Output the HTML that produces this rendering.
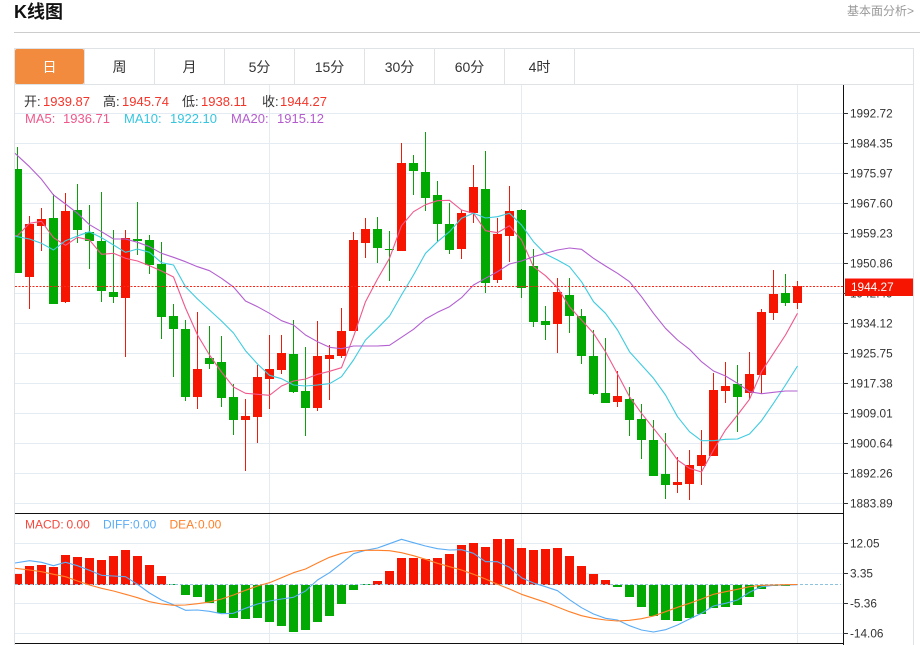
<!DOCTYPE html>
<html><head><meta charset="utf-8">
<style>
html,body{margin:0;padding:0;background:#fff;width:920px;height:645px;overflow:hidden}
body{position:relative;font-family:"Liberation Sans","Noto Sans CJK SC",sans-serif}
.a{position:absolute;white-space:nowrap}
.tab{position:absolute;top:49px;height:35px;width:69px;line-height:37px;text-align:center;font-size:14px;color:#333;border-right:1px solid #e0e3e6}
svg{position:absolute;left:0;top:0}
svg text{font-family:"Liberation Sans","Noto Sans CJK SC",sans-serif}
</style></head><body>
<div class="a" style="left:14px;top:1px;font-size:18px;line-height:22px;font-weight:bold;color:#111">K线图</div>
<div class="a" style="left:847px;top:4px;font-size:12px;line-height:15px;color:#999">基本面分析&gt;</div>
<div class="a" style="left:14px;top:32px;width:906px;height:1px;background:#ccc"></div>
<div class="a" style="left:14px;top:48px;width:899px;height:1px;background:#e0e3e6"></div>
<div class="a" style="left:14px;top:84px;width:899px;height:1px;background:#e0e3e6"></div>
<div class="a" style="left:14px;top:48px;width:1px;height:597px;background:#e0e3e6"></div>
<div class="a" style="left:913px;top:48px;width:1px;height:597px;background:#e0e3e6"></div>
<div class="a" style="left:15px;top:49px;width:69px;height:35px;background:#f38b3e;border-radius:2px;line-height:37px;text-align:center;font-size:14px;color:#fff">日</div>
<div class="tab" style="left:85px">周</div>
<div class="tab" style="left:155px">月</div>
<div class="tab" style="left:225px">5分</div>
<div class="tab" style="left:295px">15分</div>
<div class="tab" style="left:365px">30分</div>
<div class="tab" style="left:435px">60分</div>
<div class="tab" style="left:505px">4时</div>
<div class="a" style="left:84px;top:49px;width:1px;height:35px;background:#e0e3e6"></div>
<svg width="920" height="645" viewBox="0 0 920 645">
<path shape-rendering="crispEdges" fill="none" stroke="#e4ebf2" stroke-width="1" d="M15 113.5H843M15 143.5H843M15 173.5H843M15 203.5H843M15 233.5H843M15 263.5H843M15 293.5H843M15 323.5H843M15 353.5H843M15 383.5H843M15 413.5H843M15 443.5H843M15 473.5H843M15 503.5H843M15 543.5H843M15 573.5H843M15 603.5H843M15 633.5H843M269.5 85V643M521.5 85V643M797.5 85V643"/>
<path shape-rendering="crispEdges" fill="none" stroke="#ee1a0a" stroke-width="1" d="M29.5 216V309M41.5 208V251M65.5 193V303M125.5 230V357M197.5 312V409M245.5 399V471M257.5 365V443M269.5 335V409M281.5 335V374M317.5 321V411M329.5 345V400M341.5 308V358M353.5 232V331M365.5 218V258M401.5 143V251M461.5 210V259M473.5 165V223M497.5 218V283M509.5 186V262M557.5 278V353M617.5 371V407M677.5 457V493M689.5 450V500M701.5 430V485M713.5 373V456M725.5 362V403M749.5 352V399M761.5 309V394M773.5 270V320M797.5 281V309"/>
<path shape-rendering="crispEdges" fill="none" stroke="#0ba00b" stroke-width="1" d="M17.5 147V273M53.5 194V304M77.5 184V243M89.5 205V269M101.5 192V302M113.5 230V303M137.5 202V255M149.5 235V274M161.5 242V339M173.5 304V377M185.5 320V401M209.5 326V369M221.5 336V407M233.5 384V435M293.5 320V393M305.5 347V436M377.5 217V263M389.5 231V281M413.5 155V195M425.5 132V211M437.5 181V242M449.5 203V254M485.5 151V293M521.5 209V298M533.5 249V327M545.5 306V340M569.5 278V333M581.5 309V364M593.5 330V395M605.5 338V403M629.5 387V436M641.5 404V459M653.5 420V476M665.5 433V499M737.5 365V432M785.5 274V306"/>
<path shape-rendering="crispEdges" fill="#f51500" d="M25 224h9v53h-9zM37 219h9v7h-9zM61 211h9v91h-9zM121 238h9v60h-9zM193 369h9v28h-9zM241 416h9v4h-9zM253 377h9v40h-9zM265 369h9v10h-9zM277 353h9v17h-9zM313 356h9v52h-9zM325 355h9v4h-9zM337 331h9v25h-9zM349 240h9v91h-9zM361 229h9v14h-9zM397 163h9v88h-9zM457 213h9v36h-9zM469 187h9v26h-9zM493 234h9v46h-9zM505 211h9v25h-9zM553 292h9v32h-9zM613 396h9v6h-9zM673 482h9v3h-9zM685 465h9v19h-9zM697 455h9v11h-9zM709 390h9v66h-9zM721 386h9v5h-9zM745 374h9v19h-9zM757 312h9v63h-9zM769 294h9v19h-9zM793 286h9v17h-9z"/>
<path shape-rendering="crispEdges" fill="#02a902" d="M15 169h7v104h-7zM49 218h9v86h-9zM73 210h9v20h-9zM85 232h9v9h-9zM97 241h9v50h-9zM109 292h9v5h-9zM133 239h9v2h-9zM145 240h9v25h-9zM157 264h9v53h-9zM169 316h9v13h-9zM181 329h9v68h-9zM205 358h9v6h-9zM217 362h9v36h-9zM229 397h9v23h-9zM289 354h9v38h-9zM301 391h9v17h-9zM373 229h9v19h-9zM385 249h9v1h-9zM409 163h9v8h-9zM421 172h9v26h-9zM433 195h9v29h-9zM445 224h9v26h-9zM481 189h9v94h-9zM517 210h9v78h-9zM529 266h9v56h-9zM541 321h9v4h-9zM565 295h9v21h-9zM577 316h9v40h-9zM589 356h9v38h-9zM601 393h9v10h-9zM625 399h9v21h-9zM637 419h9v21h-9zM649 440h9v36h-9zM661 474h9v11h-9zM733 384h9v13h-9zM781 293h9v10h-9z"/>
<g fill="none" stroke-width="1.1" stroke-linejoin="round">
<polyline stroke="#f0588c" points="15,236 17.5,235.7 29.5,223.3 41.5,221.3 53.5,237.7 65.5,245.3 77.5,237.3 89.5,240 101.5,254.3 113.5,253.3 125.5,258.3 137.5,261 149.5,265.7 161.5,271 173.5,277 185.5,308 197.5,335 209.5,355 221.5,372 233.5,387 245.5,393.3 257.5,394.3 269.5,395.3 281.5,386 293.5,381 305.5,379 317.5,374.3 329.5,371.3 341.5,367.7 353.5,336.7 365.5,301.7 377.5,279 389.5,258.3 401.5,225.7 413.5,211.7 425.5,204.7 437.5,200.7 449.5,200.3 461.5,210 473.5,213.3 485.5,230.7 497.5,232.7 509.5,225.7 521.5,240 533.5,266.7 545.5,275.7 557.5,287.7 569.5,306.7 581.5,320 593.5,333.3 605.5,351.7 617.5,374 629.5,396.7 641.5,413.3 653.5,428.3 665.5,443.3 677.5,460 689.5,468.3 701.5,472 713.5,450 725.5,430 737.5,415 749.5,399.3 761.5,371.7 773.5,353.3 785.5,335 797.5,313.3"/>
<polyline stroke="#3ecbe0" points="15,236 17.5,236.7 29.5,239 41.5,243.3 53.5,250 65.5,240.7 77.5,236 89.5,231.7 101.5,237.7 113.5,245 125.5,252.3 137.5,249 149.5,252.3 161.5,262.7 173.5,265 185.5,286.7 197.5,299 209.5,310 221.5,321 233.5,333 245.5,350.7 257.5,364 269.5,375.3 281.5,378.7 293.5,385 305.5,386 317.5,385 329.5,383.7 341.5,376.7 353.5,360 365.5,340 377.5,328.3 389.5,316 401.5,295 413.5,275 425.5,253.3 437.5,241.7 449.5,231.7 461.5,218.3 473.5,213.3 485.5,218 497.5,216.7 509.5,213.3 521.5,225 533.5,241.7 545.5,254 557.5,260 569.5,266.7 581.5,281.7 593.5,301.7 605.5,313.3 617.5,330 629.5,351.7 641.5,365 653.5,378.3 665.5,395 677.5,416.7 689.5,431.7 701.5,440.7 713.5,440.7 725.5,439.3 737.5,439 749.5,434 761.5,420.7 773.5,403.3 785.5,385 797.5,366"/>
<polyline stroke="#b35fd0" points="15,153.3 29.5,166.7 41.5,179.3 53.5,195 65.5,204 77.5,213.3 89.5,224.7 101.5,231.7 113.5,239 125.5,239 137.5,242.3 149.5,246.7 161.5,253.3 173.5,257.3 185.5,261.7 197.5,266.7 209.5,270.7 221.5,278.3 233.5,287 245.5,301 257.5,306.7 269.5,313.3 281.5,320.7 293.5,325 305.5,335 317.5,341.7 329.5,347.3 341.5,348.7 353.5,346 365.5,346 377.5,346 389.5,345.3 401.5,337.3 413.5,329.3 425.5,319 437.5,312.3 449.5,306.7 461.5,297.7 473.5,285 485.5,278.3 497.5,271.7 509.5,264 521.5,261 533.5,256.7 545.5,253.3 557.5,250 569.5,248 581.5,249.3 593.5,258.3 605.5,266 617.5,273.3 629.5,281.7 641.5,296.7 653.5,313.3 665.5,328.3 677.5,340 689.5,349.3 701.5,361.7 713.5,371 725.5,376 737.5,383.3 749.5,391.7 761.5,393.7 773.5,392.3 785.5,391 797.5,391"/>
</g>
<path fill="none" stroke="#f5281a" stroke-width="1" stroke-dasharray="2 1.5" shape-rendering="crispEdges" d="M15 286.5H843"/>
<path shape-rendering="crispEdges" fill="none" stroke="#111" stroke-width="1" d="M15 513.5H843M15 643.5H843M843.5 85V645"/>
<path shape-rendering="crispEdges" fill="none" stroke="#333" stroke-width="1" d="M843 113.5h5M843 143.5h5M843 173.5h5M843 203.5h5M843 233.5h5M843 263.5h5M843 293.5h5M843 323.5h5M843 353.5h5M843 383.5h5M843 413.5h5M843 443.5h5M843 473.5h5M843 503.5h5M843 543.5h5M843 573.5h5M843 603.5h5M843 633.5h5"/>
<path shape-rendering="crispEdges" fill="#f51500" d="M15 574h7v11h-7zM25 566h9v19h-9zM37 565h9v20h-9zM49 567h9v18h-9zM61 555h9v30h-9zM73 557h9v28h-9zM85 558h9v27h-9zM97 560h9v25h-9zM109 556h9v29h-9zM121 550h9v35h-9zM133 556h9v29h-9zM145 565h9v20h-9zM157 576h9v9h-9zM373 581h9v4h-9zM385 571h9v14h-9zM397 558h9v27h-9zM409 558h9v27h-9zM421 559h9v26h-9zM433 558h9v27h-9zM445 554h9v31h-9zM457 545h9v40h-9zM469 543h9v42h-9zM481 547h9v38h-9zM493 539h9v46h-9zM505 539h9v46h-9zM517 548h9v37h-9zM529 550h9v35h-9zM541 549h9v36h-9zM553 548h9v37h-9zM565 556h9v29h-9zM577 566h9v19h-9zM589 574h9v11h-9zM601 580h9v5h-9z"/>
<path shape-rendering="crispEdges" fill="#02a902" d="M169 584h9v1h-9zM181 585h9v10h-9zM193 585h9v12h-9zM205 585h9v18h-9zM217 585h9v28h-9zM229 585h9v33h-9zM241 585h9v34h-9zM253 585h9v33h-9zM265 585h9v37h-9zM277 585h9v41h-9zM289 585h9v47h-9zM301 585h9v45h-9zM313 585h9v37h-9zM325 585h9v31h-9zM337 585h9v19h-9zM349 585h9v5h-9zM361 584h9v1h-9zM613 585h9v2h-9zM625 585h9v12h-9zM637 585h9v22h-9zM649 585h9v31h-9zM661 585h9v35h-9zM673 585h9v36h-9zM685 585h9v33h-9zM697 585h9v29h-9zM709 585h9v23h-9zM721 585h9v22h-9zM733 585h9v20h-9zM745 585h9v12h-9zM757 585h9v4h-9zM769 585h9v1h-9zM781 585h9v1h-9z"/>
<path fill="none" stroke="#8cc4e0" stroke-width="1" stroke-dasharray="3 2" shape-rendering="crispEdges" d="M15 584.5H841"/>
<g fill="none" stroke-width="1.1" stroke-linejoin="round">
<polyline stroke="#5aacf5" points="15,563 29.5,560.7 41.5,562.3 53.5,565.7 65.5,562.3 77.5,565.7 89.5,570.3 101.5,575.3 113.5,576 125.5,576.7 137.5,584.3 149.5,593 161.5,600 173.5,604.7 185.5,610.3 197.5,610 209.5,611.3 221.5,613.7 233.5,613.3 245.5,608.3 257.5,604 269.5,601 281.5,599 293.5,597.3 305.5,591 317.5,580 329.5,572.7 341.5,563.3 353.5,553.7 365.5,550.3 377.5,548 389.5,543.7 401.5,539.3 413.5,542.7 425.5,546 437.5,548.7 449.5,550 461.5,549.7 473.5,553.3 485.5,561.7 497.5,561.7 509.5,567.3 521.5,577.7 533.5,583 545.5,586.7 557.5,590.7 569.5,599.7 581.5,607.7 593.5,614 605.5,618.3 617.5,620 629.5,625.7 641.5,630 653.5,632 665.5,629.7 677.5,625 689.5,619 701.5,613.3 713.5,606 725.5,603.3 737.5,600 749.5,592.3 761.5,586.7 773.5,585.3 785.5,585 797.5,584.7"/>
<polyline stroke="#ff7f27" points="15,568.3 29.5,570 41.5,571.7 53.5,574.3 65.5,576.7 77.5,581 89.5,585 101.5,588.3 113.5,591 125.5,594.3 137.5,597.7 149.5,601.7 161.5,604 173.5,605.3 185.5,605 197.5,603.7 209.5,602 221.5,599 233.5,595 245.5,590.3 257.5,586 269.5,582.7 281.5,577.7 293.5,572.7 305.5,569 317.5,563 329.5,557.3 341.5,553.3 353.5,551 365.5,550.3 377.5,550.3 389.5,550.7 401.5,552.7 413.5,555.7 425.5,559.3 437.5,563.3 449.5,566.7 461.5,570 473.5,574.3 485.5,579 497.5,584.3 509.5,589 521.5,594.3 533.5,598.3 545.5,602.3 557.5,607 569.5,611.7 581.5,615.7 593.5,618.3 605.5,620 617.5,621 629.5,620.3 641.5,618.7 653.5,616 665.5,611.7 677.5,607.3 689.5,603.3 701.5,599 713.5,594.3 725.5,591.7 737.5,589.3 749.5,586.7 761.5,585.3 773.5,585 785.5,584.7 797.5,584.5"/>
</g>
<text x="850" y="297.5" font-size="11.8" fill="#333">1942.49</text>
<rect x="845" y="278" width="68" height="18" fill="#f51500"/>
<rect x="845" y="278" width="68" height="1" fill="#f88"/>
<g font-size="11.8" fill="#333">
<text x="850" y="117.5">1992.72</text><text x="850" y="147.5">1984.35</text><text x="850" y="177.5">1975.97</text><text x="850" y="207.5">1967.60</text><text x="850" y="237.5">1959.23</text><text x="850" y="267.5">1950.86</text><text x="850" y="327.5">1934.12</text><text x="850" y="357.5">1925.75</text><text x="850" y="387.5">1917.38</text><text x="850" y="417.5">1909.01</text><text x="850" y="447.5">1900.64</text><text x="850" y="477.5">1892.26</text><text x="850" y="507.5">1883.89</text>
<text x="850" y="547.5">12.05</text><text x="850" y="577.5">3.35</text><text x="850" y="607.5">-5.36</text><text x="850" y="637.5">-14.06</text>
</g>
<text x="851" y="291" font-size="11.8" fill="#fff">1944.27</text>
<g font-size="13">
<text x="24" y="106" fill="#333">开:</text><text x="43" y="106" fill="#f5352a">1939.87</text>
<text x="103" y="106" fill="#333">高:</text><text x="122" y="106" fill="#f5352a">1945.74</text>
<text x="182" y="106" fill="#333">低:</text><text x="201" y="106" fill="#f5352a">1938.11</text>
<text x="262" y="106" fill="#333">收:</text><text x="280" y="106" fill="#f5352a">1944.27</text>
<text x="25" y="123" fill="#f0588c">MA5:</text><text x="63" y="123" fill="#f0588c">1936.71</text>
<text x="124" y="123" fill="#36c6e0">MA10:</text><text x="170" y="123" fill="#36c6e0">1922.10</text>
<text x="231" y="123" fill="#b45cce">MA20:</text><text x="277" y="123" fill="#b45cce">1915.12</text>
</g>
<g font-size="12">
<text x="25" y="528.5" fill="#f5493d">MACD:</text><text x="66.5" y="528.5" fill="#f5493d">0.00</text>
<text x="103" y="528.5" fill="#5aacf5">DIFF:</text><text x="133" y="528.5" fill="#5aacf5">0.00</text>
<text x="169.5" y="528.5" fill="#ff7f27">DEA:</text><text x="198" y="528.5" fill="#ff7f27">0.00</text>
</g>
</svg>
</body></html>
